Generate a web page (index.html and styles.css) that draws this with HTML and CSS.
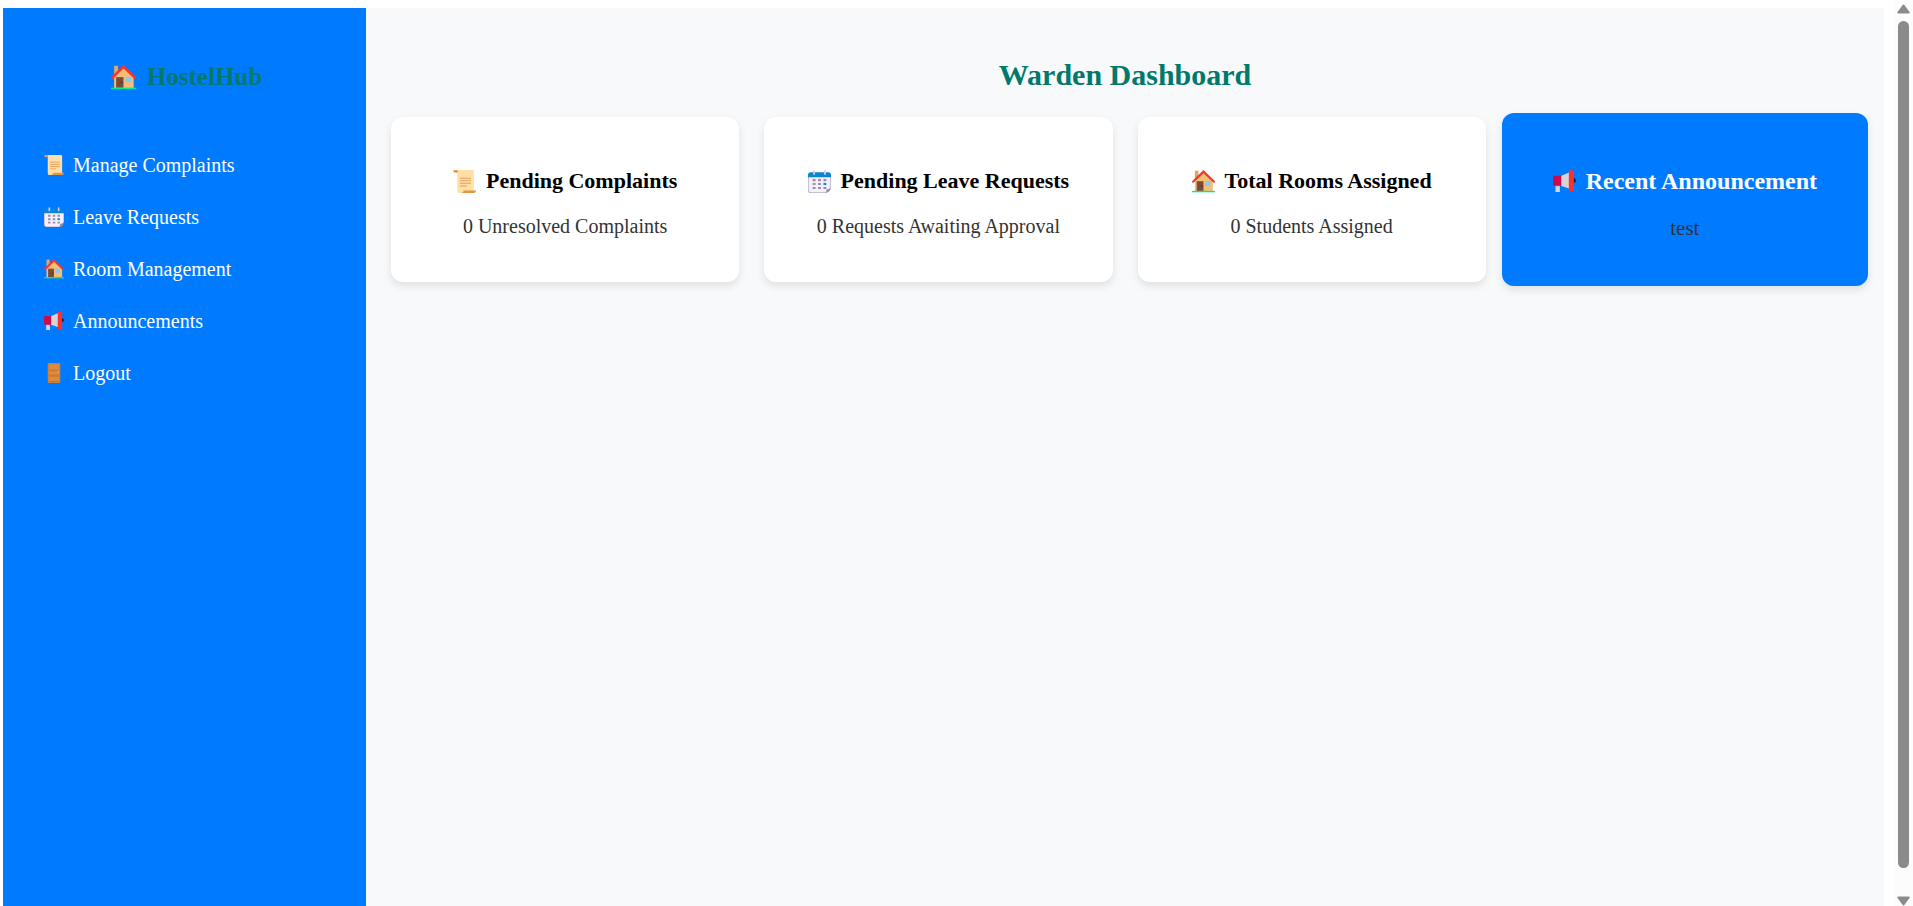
FILE: index.html
```html
<!DOCTYPE html>
<html lang="en">
<head>
  <meta charset="utf-8">
  <meta name="viewport" content="width=device-width, initial-scale=1">
  <title>Warden Dashboard</title>
  <link rel="stylesheet" href="styles.css">
</head>
<body>
  <svg class="sprite" aria-hidden="true">
    <symbol id="house" viewBox="0 0 32 32">
      <path fill="#e0a866" d="M4 1h5v12H4z"/>
      <path fill="#f4be74" d="M16 3 29 16v14H4V16z"/>
      <path fill="#f8342f" d="M16 0 32 15.500v2h-2.500L16 4.500 2.500 17.500H0v-2z"/>
      <path fill="#85503f" d="M6.500 15.500h9.500V29H6.500z"/>
      <path fill="#6d3f31" d="M7.800 16.800h6.900V29H7.800z" opacity=".35"/>
      <circle cx="13.700" cy="22.500" r="1" fill="#3f241c"/>
      <path fill="#83cbff" d="M18.500 15.500h7v6.500h-7z"/>
      <path fill="#00e994" d="M0 29h32v2H0z"/>
    </symbol>
    <symbol id="scroll" viewBox="0 0 32 32">
      <path fill="#ffdfa8" d="M4 0h23a2 2 0 0 1 2 2v27l-13 3H9a3 3 0 0 1-3-3V4z"/>
      <path fill="#e19747" d="M2 0h3C6.500 0 7 2 6 3.500H2.500C0 3.500 0 0 2 0z"/>
      <path fill="#bb742d" d="M4.500 1.500c1 .2 1 2-.5 2z"/>
      <path fill="#e19747" d="M15 28.500h17c0 2-1 3.500-3 3.500H11c2.500 0 3.500-1.500 4-3.500z"/>
      <path stroke="#e3a15a" stroke-width="1.500" d="M9.500 11.500h15.500M9.500 15h15.500M9.500 18.500h15.500M9.500 22.200h10"/>
    </symbol>
    <symbol id="calendar" viewBox="0 0 32 32">
      <path fill="#b8adc9" d="M0 9h32v15l-7 8H4a4 4 0 0 1-4-4z"/>
      <path fill="#f5effc" d="M1 9h30v15.500L25 31H4.500A3.500 3.500 0 0 1 1 27.500z"/>
      <path fill="#0b86d1" d="M4 3h24a4 4 0 0 1 4 4v3H0V7a4 4 0 0 1 4-4z"/>
      <path stroke="#d6cbe5" stroke-width="2.500" stroke-linecap="round" d="M8.500 1.500v4M23.500 1.500v4"/>
      <path fill="#998ea4" d="M6.500 12.500h4v3h-4zM14 12.500h4v3h-4zM21.500 12.500h4v3h-4zM6.500 18h4v3h-4zM14 18h4v3h-4zM6.500 23.500h4v3h-4zM14 23.500h4v3h-4zM21.500 23.500h4v3h-4z"/>
      <path fill="#008bd5" d="M21.500 18h4v3h-4z"/>
      <path fill="#998ea4" d="M32 24.500c-.5 4-3 7-7.500 7.500 1-1 1-2.500 1-5 2.500 0 5-.5 6.500-2.500z"/>
    </symbol>
    <symbol id="megaphone" viewBox="0 0 32 32">
      <path fill="#d5d5d7" d="M3.500 20h6v10.500h-6zM11 8.500 23 3v23l-12-4z"/>
      <path fill="#b4b2b8" d="M3.500 21h6v2h-6z"/>
      <path fill="#cb0b4b" d="M2 8h9.500v14H2a2 2 0 0 1-2-2V10a2 2 0 0 1 2-2z"/>
      <path fill="#1c1c1c" d="M28 11c5 0 5 7 0 7z"/>
      <path fill="#fb302f" d="M24 .5h3a2 2 0 0 1 2 2v25a2 2 0 0 1-2 2h-3a2 2 0 0 1-2-2v-25a2 2 0 0 1 2-2z"/>
    </symbol>
    <symbol id="door" viewBox="0 0 32 32">
      <rect width="20" height="32" x="6" rx="2" fill="#d17f35"/>
      <path fill="#df8b3f" d="M8.500 2.500h15v9h-15zM8.500 13.500h15v4.500h-15zM8.500 21h15v8.500h-15z"/>
      <path fill="none" stroke="#b96b2b" d="M8.500 11.500h15M8.500 21h15M8.500 29.500h15"/>
      <circle cx="23" cy="14.500" r="1.300" fill="#f7b43c"/>
    </symbol>
  </svg>

  <div class="page">
    <aside class="sidebar">
      <h2 class="brand"><svg class="icon"><use href="#house"/></svg>HostelHub</h2>
      <nav class="menu">
        <a class="menu-link" href="#complaints"><svg class="icon"><use href="#scroll"/></svg>Manage Complaints</a>
        <a class="menu-link" href="#leave"><svg class="icon"><use href="#calendar"/></svg>Leave Requests</a>
        <a class="menu-link" href="#rooms"><svg class="icon"><use href="#house"/></svg>Room Management</a>
        <a class="menu-link" href="#announcements"><svg class="icon"><use href="#megaphone"/></svg>Announcements</a>
        <a class="menu-link" href="#logout"><svg class="icon"><use href="#door"/></svg>Logout</a>
      </nav>
    </aside>

    <main class="content">
      <h1 class="title">Warden Dashboard</h1>
      <div class="cards">
        <section class="card">
          <h3 class="card-title"><svg class="icon"><use href="#scroll"/></svg>Pending Complaints</h3>
          <p class="card-text">0 Unresolved Complaints</p>
        </section>
        <section class="card">
          <h3 class="card-title"><svg class="icon"><use href="#calendar"/></svg>Pending Leave Requests</h3>
          <p class="card-text">0 Requests Awaiting Approval</p>
        </section>
        <section class="card">
          <h3 class="card-title"><svg class="icon"><use href="#house"/></svg>Total Rooms Assigned</h3>
          <p class="card-text">0 Students Assigned</p>
        </section>
        <section class="card card-active">
          <h3 class="card-title"><svg class="icon"><use href="#megaphone"/></svg>Recent Announcement</h3>
          <p class="card-text">test</p>
        </section>
      </div>
    </main>
  </div>

  <div class="scrollbar" aria-hidden="true">
    <svg class="arrow" viewBox="0 0 13 10"><path d="M5.500 1.200q1-1.200 2 0l5 6.800q.8 1.500-1 1.500h-10q-1.800 0-1-1.500z"/></svg>
    <div class="thumb"></div>
    <svg class="arrow" viewBox="0 0 13 10"><path d="M5.500 8.800q1 1.200 2 0l5-6.800q.8-1.500-1-1.500h-10q-1.800 0-1 1.500z"/></svg>
  </div>
</body>
</html>
```
FILE: styles.css
```css
* {
  box-sizing: border-box;
}

body {
  display: flex;
  height: 100vh;
  margin: 0;
  overflow: hidden;
  background: #fff;
  font-family: "Liberation Serif", "Times New Roman", serif;
}

h1, h2, h3, p {
  margin: 0;
}

.sprite {
  position: absolute;
  width: 0;
  height: 0;
}

.icon {
  flex: none;
  width: 20px;
  height: 20px;
}

.page {
  display: flex;
  flex: 1;
  padding: 8px 10px 0 3px;
}

.sidebar {
  flex: none;
  width: 363px;
  padding: 51px 41px;
  background: #007bff;
}

.brand {
  display: flex;
  align-items: center;
  justify-content: center;
  gap: 11px;
  margin-bottom: 46px;
  padding-left: 4px;
  color: #00796b;
  font-size: 25px;
  line-height: 36px;
}

.brand .icon {
  width: 25px;
  height: 25px;
}

.menu {
  display: flex;
  flex-direction: column;
  gap: 4px;
}

.menu-link {
  display: flex;
  align-items: center;
  gap: 9px;
  color: #fff;
  font-size: 20px;
  line-height: 48px;
  text-decoration: none;
}

.content {
  flex: 1;
  padding: 49px 25px;
  background: #f8f9fb;
}

.title {
  margin-bottom: 24px;
  color: #00796b;
  font-size: 30px;
  line-height: 36px;
  text-align: center;
}

.cards {
  display: grid;
  grid-template-columns: repeat(4, 1fr);
  gap: 25px;
}

.card {
  padding: 49px 25px 43px;
  border-radius: 12px;
  background: #fff;
  box-shadow: 0 4px 8px rgba(0, 0, 0, 0.1);
}

.card-title {
  display: flex;
  align-items: center;
  justify-content: center;
  gap: 10px;
  margin-bottom: 18px;
  color: #000;
  font-size: 22px;
  line-height: 30px;
  white-space: nowrap;
}

.card-title .icon {
  width: 23px;
  height: 23px;
}

.card-text {
  color: #333;
  font-size: 20px;
  line-height: 25px;
  text-align: center;
}

.card-active {
  margin: -4px -9px;
  padding: 53px 25px 45px;
  background: #007bff;
}

.card-active .card-title {
  margin-bottom: 20px;
  color: #fff;
  font-size: 24px;
}

.card-active .card-text {
  font-size: 21px;
}

.scrollbar {
  display: flex;
  flex: none;
  flex-direction: column;
  align-items: center;
  gap: 7px;
  width: 19px;
  padding: 4px 0 0;
  background: #fcfcfc;
}

.arrow {
  flex: none;
  width: 13px;
  height: 10px;
  fill: #8b8b8b;
}

.thumb {
  flex: 1;
  width: 11px;
  margin-bottom: 21px;
  border-radius: 6px;
  background: #8b8b8b;
}
```
